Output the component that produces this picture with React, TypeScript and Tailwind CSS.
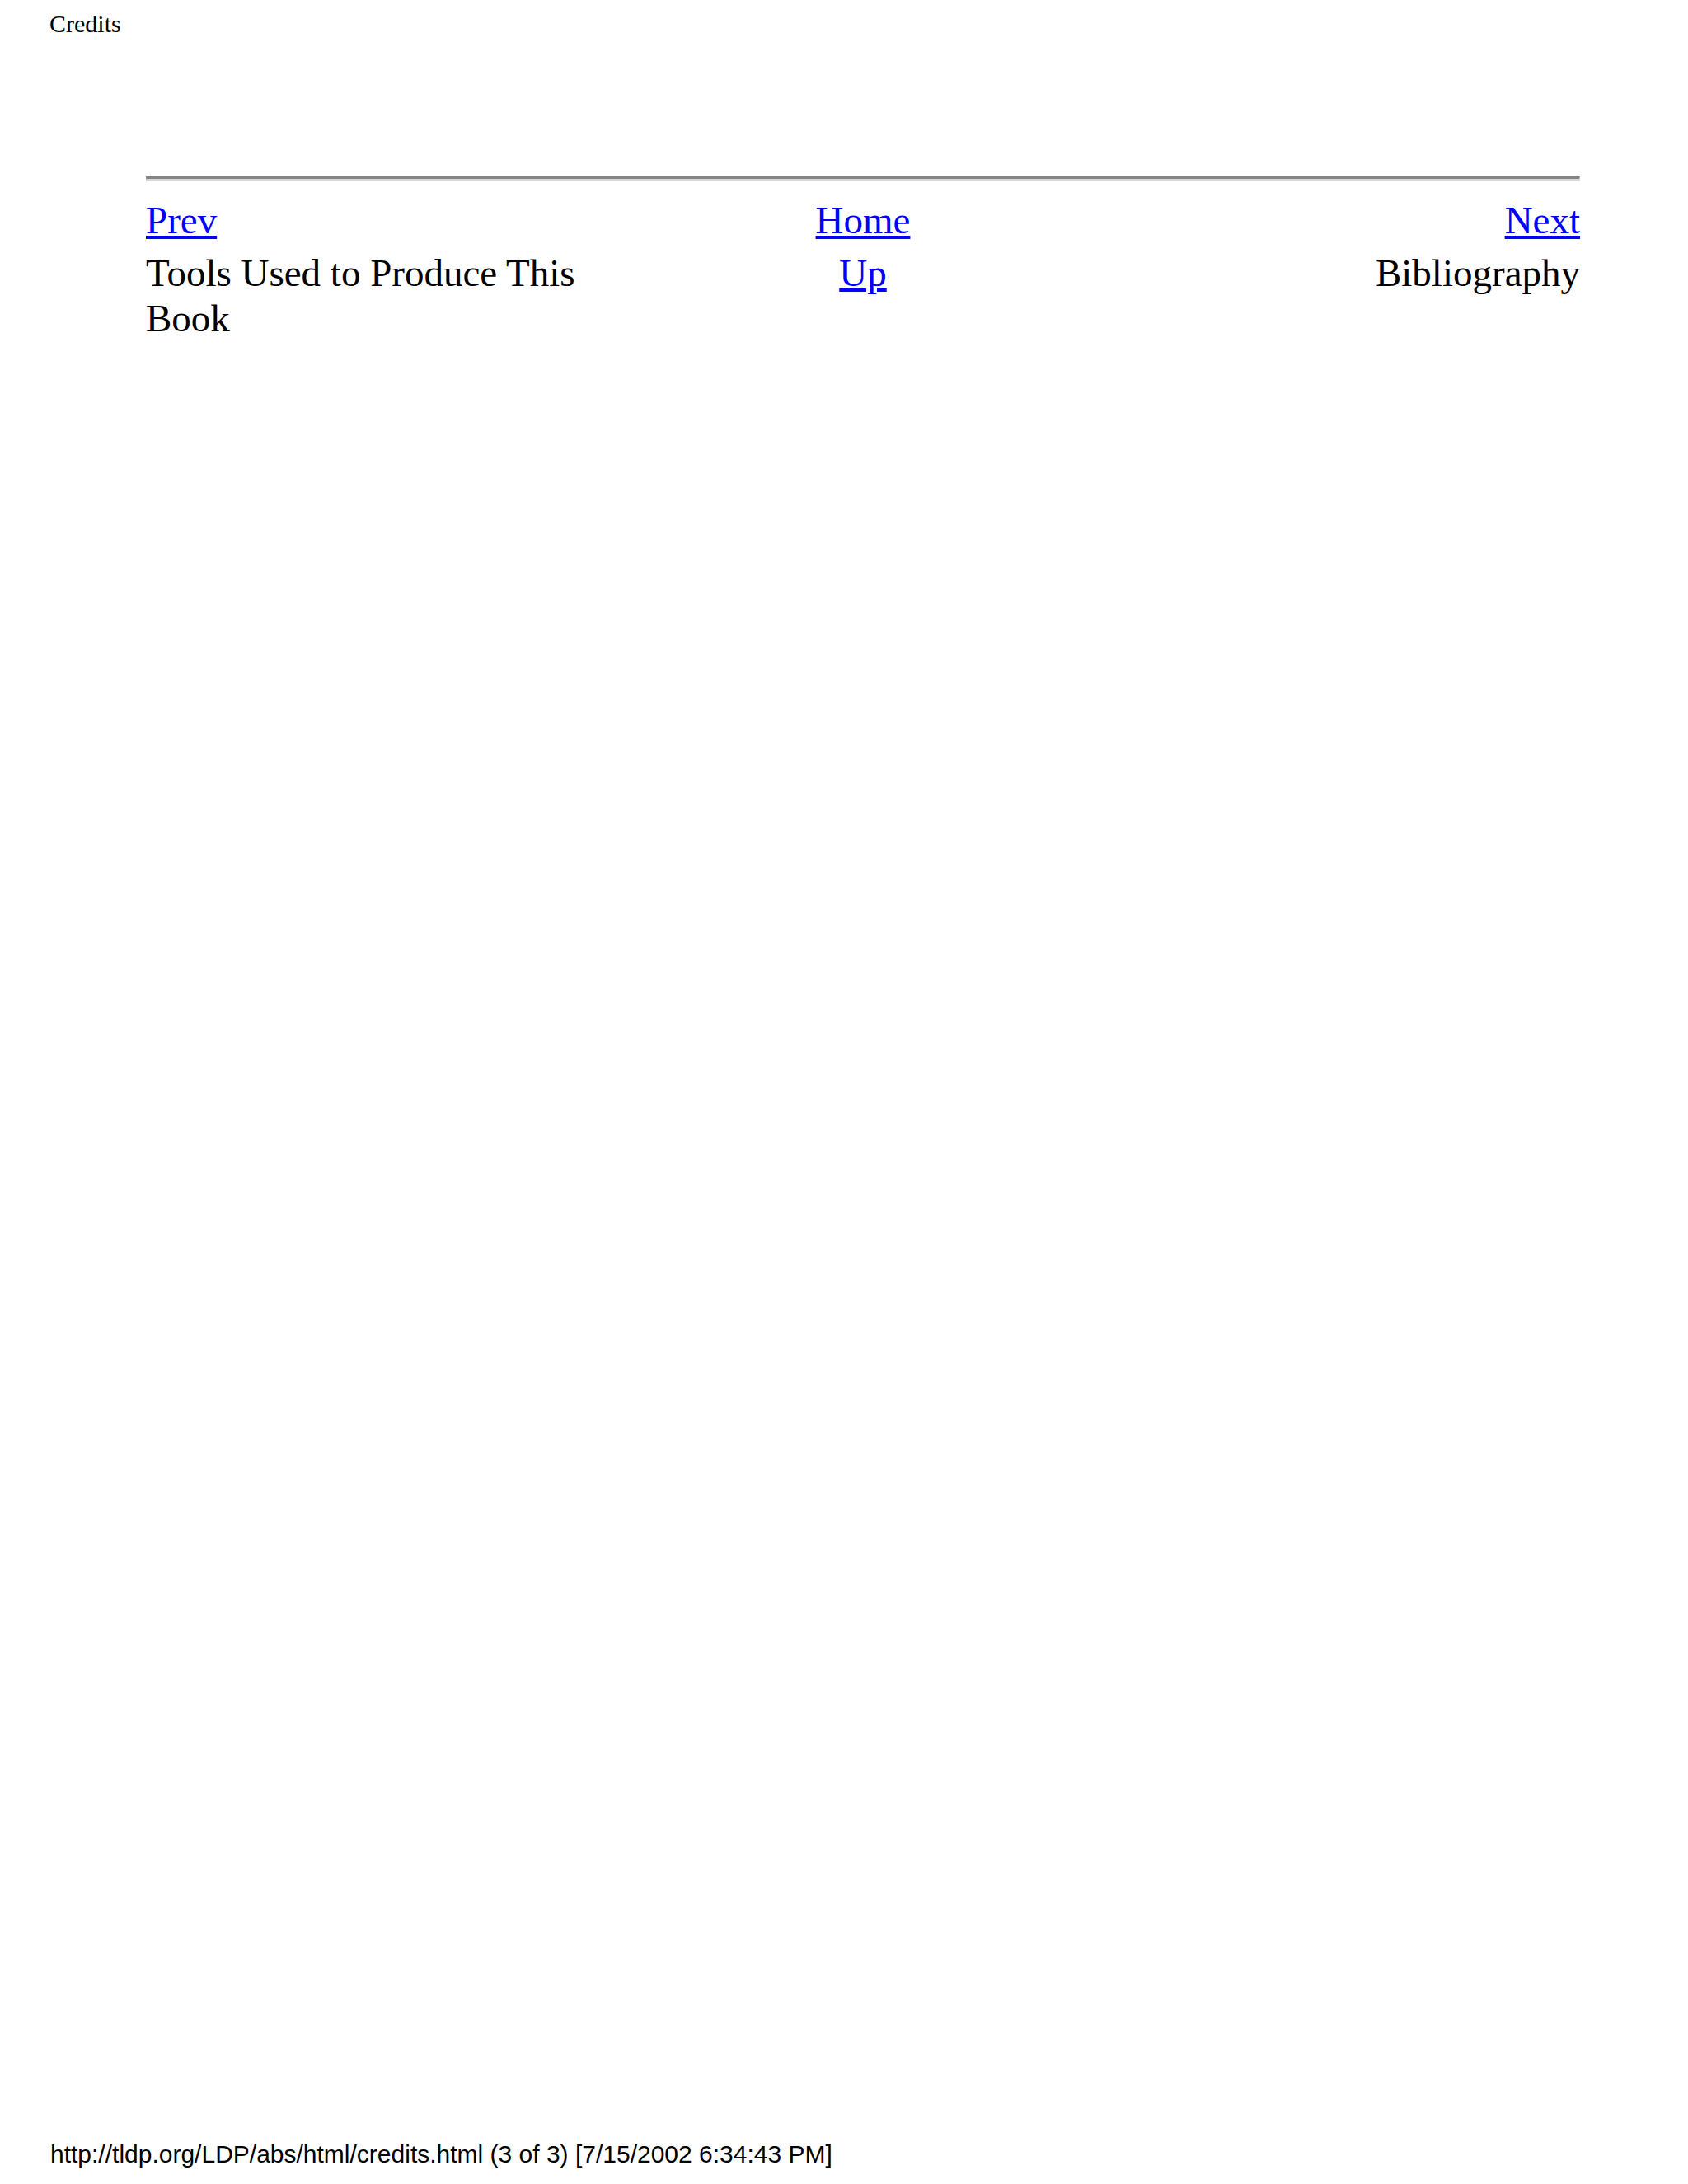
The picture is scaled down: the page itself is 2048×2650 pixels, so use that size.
import React from "react";

export default function App() {
  return (
    <div className="min-h-[2650px] bg-white flex flex-col text-black">
      <div className="pl-[60px] pt-[12px] font-['Liberation_Serif',serif] text-[30px] leading-[34px]">
        Credits
      </div>
      <div className="ml-[177px] w-[1740px] mt-[168px]">
        <div className="h-[6px] border-t-[3px] border-b-[3px] border-t-[#858585] border-b-[#d6d6d6] border-l border-l-[#a8a8a8] border-r border-r-[#e2e2e2]" />
        <div className="mt-[20px] grid grid-cols-[600px_1fr_600px] gap-y-[9px] font-['Liberation_Serif',serif] text-[47px] leading-[55px]">
          <div>
            <a href="#" className="text-[#0000ff] underline">Prev</a>
          </div>
          <div className="text-center">
            <a href="#" className="text-[#0000ff] underline">Home</a>
          </div>
          <div className="text-right">
            <a href="#" className="text-[#0000ff] underline">Next</a>
          </div>
          <div>Tools Used to Produce This Book</div>
          <div className="text-center">
            <a href="#" className="text-[#0000ff] underline">Up</a>
          </div>
          <div className="text-right">Bibliography</div>
        </div>
      </div>
      <div className="mt-auto pl-[61px] pb-[19px] font-['Liberation_Sans',Arial,sans-serif] text-[30px] leading-[34px]">
        http://tldp.org/LDP/abs/html/credits.html (3 of 3) [7/15/2002 6:34:43 PM]
      </div>
    </div>
  );
}
